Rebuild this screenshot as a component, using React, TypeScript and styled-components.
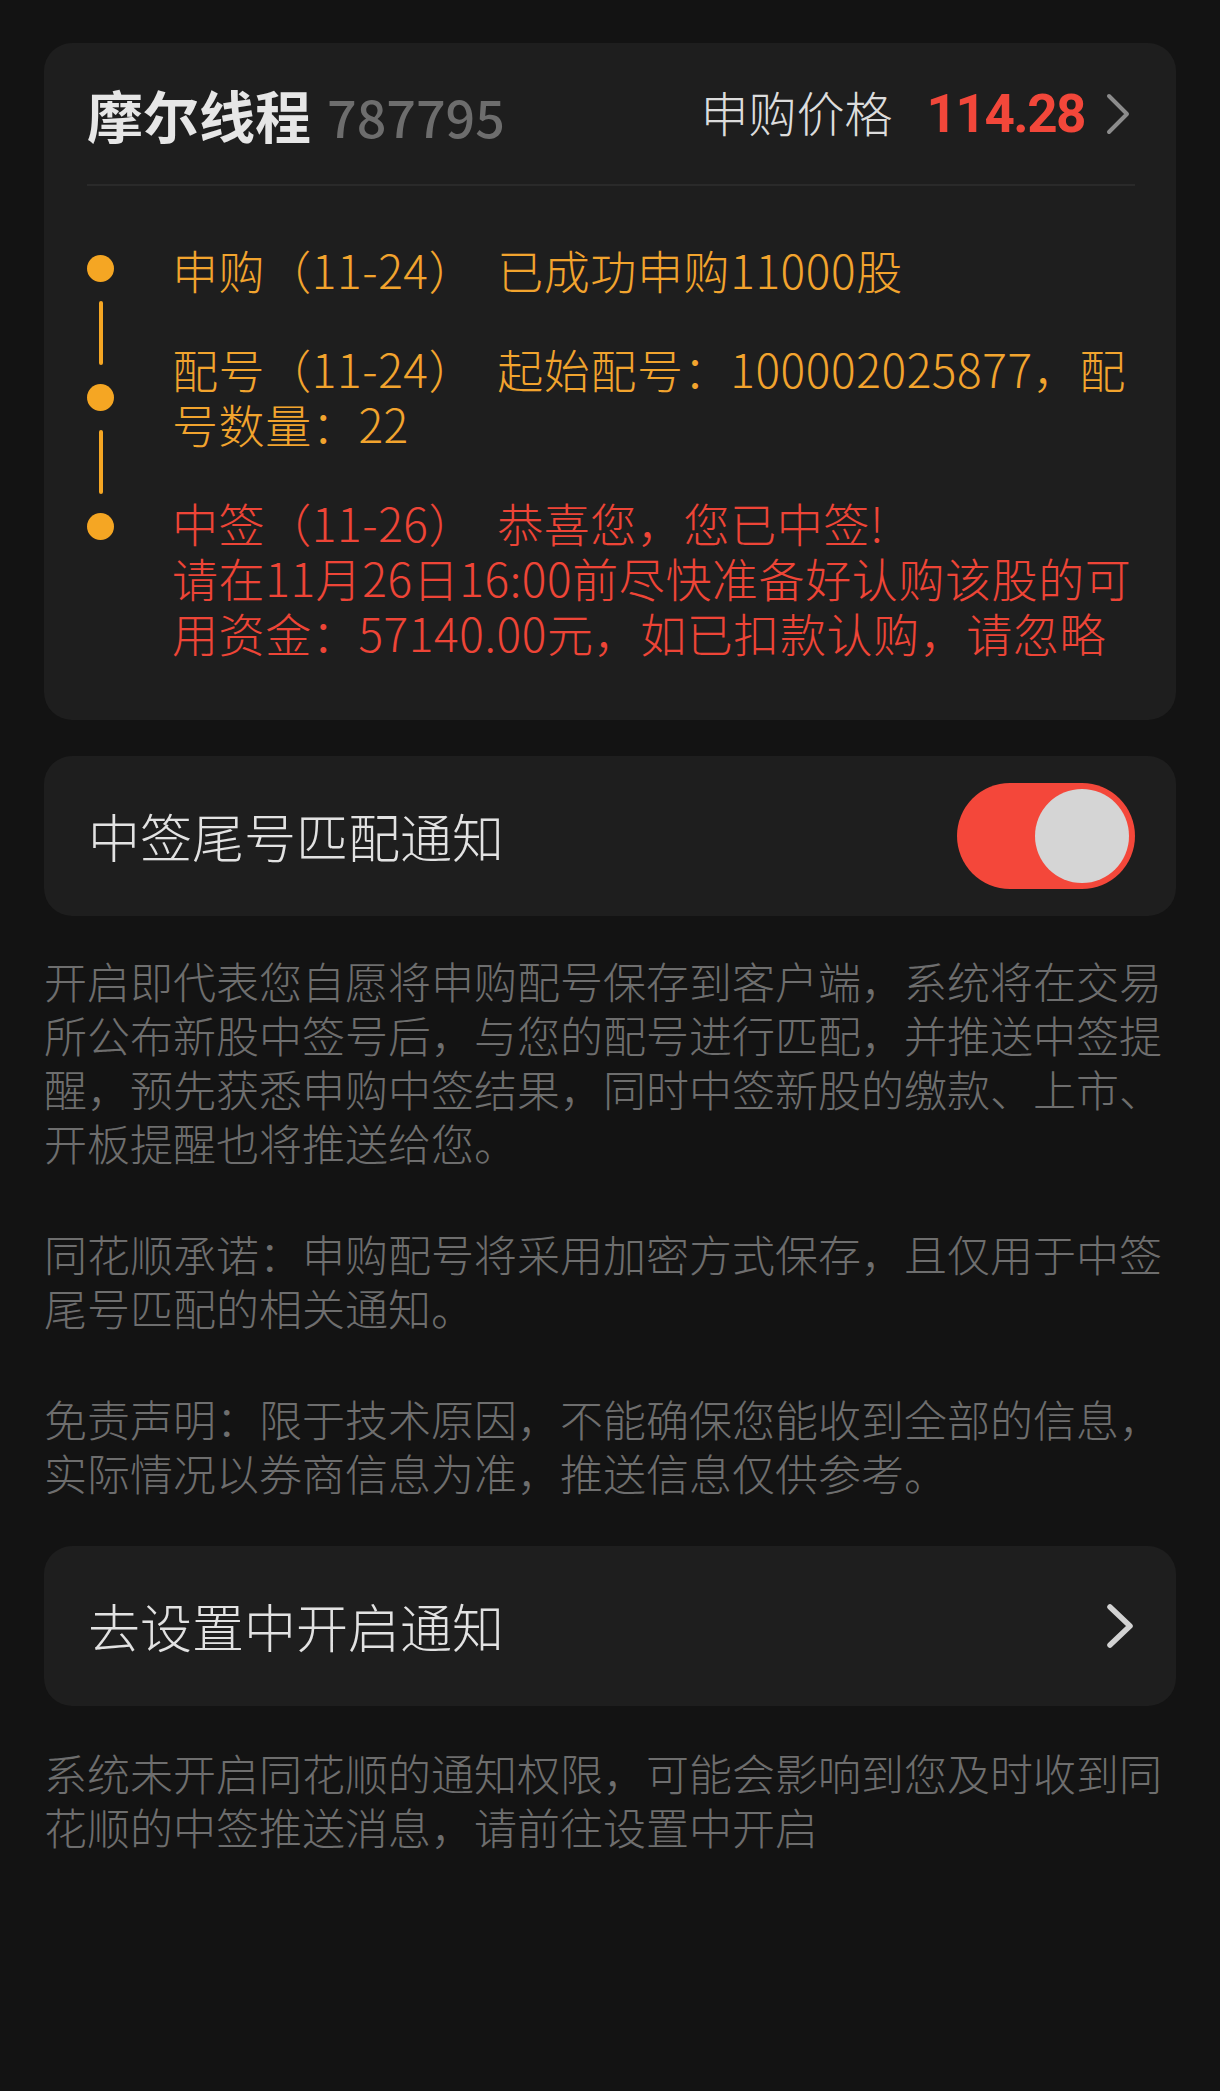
import React from 'react';
import styled, { createGlobalStyle } from 'styled-components';

const GlobalStyle = createGlobalStyle`
  html, body {
    margin: 0;
    padding: 0;
    background: #131313;
  }
  body {
    font-family: "Noto Sans CJK SC", "Noto Sans", sans-serif;
  }
`;

const Page = styled.main`
  min-height: 2091px;
  box-sizing: border-box;
  padding: 43px 44px 0 44px;
  background: #131313;
  display: flex;
  flex-direction: column;
`;

const Card = styled.section`
  background: #1e1e1e;
  border-radius: 28px;
`;

const InfoCard = styled(Card)`
  padding: 0 41px 60px 43px;
`;

const Header = styled.header`
  height: 141px;
  display: flex;
  align-items: center;
  border-bottom: 2px solid #2a2a2a;
`;

const BaselineGroup = styled.div`
  display: flex;
  align-items: baseline;
`;

const Title = styled.span`
  font-size: 56px;
  font-weight: 600;
  color: #e6e6e6;
  line-height: 1;
`;

const Code = styled.span`
  margin-left: 16px;
  font-size: 52px;
  font-weight: 500;
  color: #6d6d6d;
  line-height: 1;
`;

const Spacer = styled.div`
  flex: 1;
`;

const PriceLabel = styled.span`
  font-size: 48px;
  font-weight: 300;
  color: #dcdcdc;
  line-height: 1;
`;

const Price = styled.span`
  margin-left: 34px;
  font-family: Roboto, "Liberation Sans", sans-serif;
  font-weight: 700;
  font-size: 53px;
  letter-spacing: -1.5px;
  color: #f2473a;
  line-height: 1;
`;

const Chevron = styled.svg<{ $color: string }>`
  display: block;
  flex-shrink: 0;
  color: ${(p) => p.$color};
`;

const HeaderChevron = styled(Chevron)`
  margin-left: 20px;
  margin-right: 4px;
`;

const Timeline = styled.div`
  display: flex;
  padding-top: 56px;
`;

const Rail = styled.div`
  display: flex;
  flex-direction: column;
  align-items: center;
  width: 27px;
  padding-top: 13px;
  flex-shrink: 0;
`;

const Dot = styled.span`
  width: 27px;
  height: 27px;
  border-radius: 50%;
  background: #f5a623;
`;

const RailLine = styled.span`
  width: 4px;
  height: 64px;
  margin: 19px 0;
  background: #f5a623;
  border-radius: 2px;
`;

const Events = styled.div`
  flex: 1;
  margin-left: 58px;
  display: flex;
  flex-direction: column;
  gap: 44px;
`;

const Event = styled.p<{ $tone: 'orange' | 'red' }>`
  margin: 0;
  font-size: 46px;
  font-weight: 300;
  letter-spacing: 0.6px;
  line-height: 55px;
  color: ${(p) => (p.$tone === 'red' ? '#ee4537' : '#f2a42e')};
`;

const EventDetail = styled.span`
  margin-left: 22px;
`;

const Line = styled.span`
  display: block;
`;

const RowCard = styled(Card)`
  height: 160px;
  box-sizing: border-box;
  display: flex;
  align-items: center;
  justify-content: space-between;
  padding: 0 41px 0 44px;
`;

const ToggleCard = styled(RowCard)`
  margin-top: 36px;
`;

const LinkCard = styled(RowCard)`
  margin-top: 47px;
`;

const RowLabel = styled.span`
  font-size: 52px;
  font-weight: 300;
  color: #e2e2e2;
  line-height: 1;
`;

const Switch = styled.button<{ $on: boolean }>`
  width: 178px;
  height: 106px;
  border-radius: 53px;
  border: none;
  padding: 6px;
  margin: 0;
  background: ${(p) => (p.$on ? '#f4473a' : '#444')};
  display: flex;
  justify-content: ${(p) => (p.$on ? 'flex-end' : 'flex-start')};
  align-items: center;
  cursor: pointer;
`;

const Knob = styled.span`
  width: 94px;
  height: 94px;
  border-radius: 50%;
  background: #d5d5d5;
`;

const Notes = styled.div`
  margin-top: 37px;
  display: flex;
  flex-direction: column;
  gap: 57px;
`;

const Note = styled.p`
  margin: 0;
  font-size: 43px;
  font-weight: 300;
  line-height: 54px;
  color: #6e6e6e;
`;

const FooterNote = styled(Note)`
  margin-top: 39px;
`;

export default function App() {
  const [on, setOn] = React.useState(true);
  return (
    <>
      <GlobalStyle />
      <Page>
        <InfoCard>
          <Header>
            <BaselineGroup>
              <Title>摩尔线程</Title>
              <Code>787795</Code>
            </BaselineGroup>
            <Spacer />
            <BaselineGroup>
              <PriceLabel>申购价格</PriceLabel>
              <Price>114.28</Price>
            </BaselineGroup>
            <HeaderChevron $color="#8c8c8c" width="26" height="44" viewBox="0 0 26 44">
              <polyline
                points="4,4 22,22 4,40"
                fill="none"
                stroke="currentColor"
                strokeWidth="4"
                strokeLinecap="round"
                strokeLinejoin="round"
              />
            </HeaderChevron>
          </Header>
          <Timeline>
            <Rail>
              <Dot />
              <RailLine />
              <Dot />
              <RailLine />
              <Dot />
            </Rail>
            <Events>
              <Event $tone="orange">
                申购（11-24）<EventDetail>已成功申购11000股</EventDetail>
              </Event>
              <Event $tone="orange">
                配号（11-24）<EventDetail>起始配号：100002025877，配号数量：22</EventDetail>
              </Event>
              <Event $tone="red">
                <Line>
                  中签（11-26）<EventDetail>恭喜您，您已中签!</EventDetail>
                </Line>
                <Line>请在11月26日16:00前尽快准备好认购该股的可用资金：57140.00元，如已扣款认购，请忽略</Line>
              </Event>
            </Events>
          </Timeline>
        </InfoCard>

        <ToggleCard>
          <RowLabel>中签尾号匹配通知</RowLabel>
          <Switch $on={on} aria-pressed={on} onClick={() => setOn(!on)}>
            <Knob />
          </Switch>
        </ToggleCard>

        <Notes>
          <Note>
            开启即代表您自愿将申购配号保存到客户端，系统将在交易所公布新股中签号后，与您的配号进行匹配，并推送中签提醒，预先获悉申购中签结果，同时中签新股的缴款、上市、开板提醒也将推送给您。
          </Note>
          <Note>同花顺承诺：申购配号将采用加密方式保存，且仅用于中签尾号匹配的相关通知。</Note>
          <Note>免责声明：限于技术原因，不能确保您能收到全部的信息，实际情况以券商信息为准，推送信息仅供参考。</Note>
        </Notes>

        <LinkCard>
          <RowLabel>去设置中开启通知</RowLabel>
          <Chevron $color="#d2d2d2" width="30" height="46" viewBox="0 0 30 46">
            <polyline
              points="5,4 25,23 5,42"
              fill="none"
              stroke="currentColor"
              strokeWidth="5.5"
              strokeLinecap="round"
              strokeLinejoin="round"
            />
          </Chevron>
        </LinkCard>

        <FooterNote>系统未开启同花顺的通知权限，可能会影响到您及时收到同花顺的中签推送消息，请前往设置中开启</FooterNote>
      </Page>
    </>
  );
}
